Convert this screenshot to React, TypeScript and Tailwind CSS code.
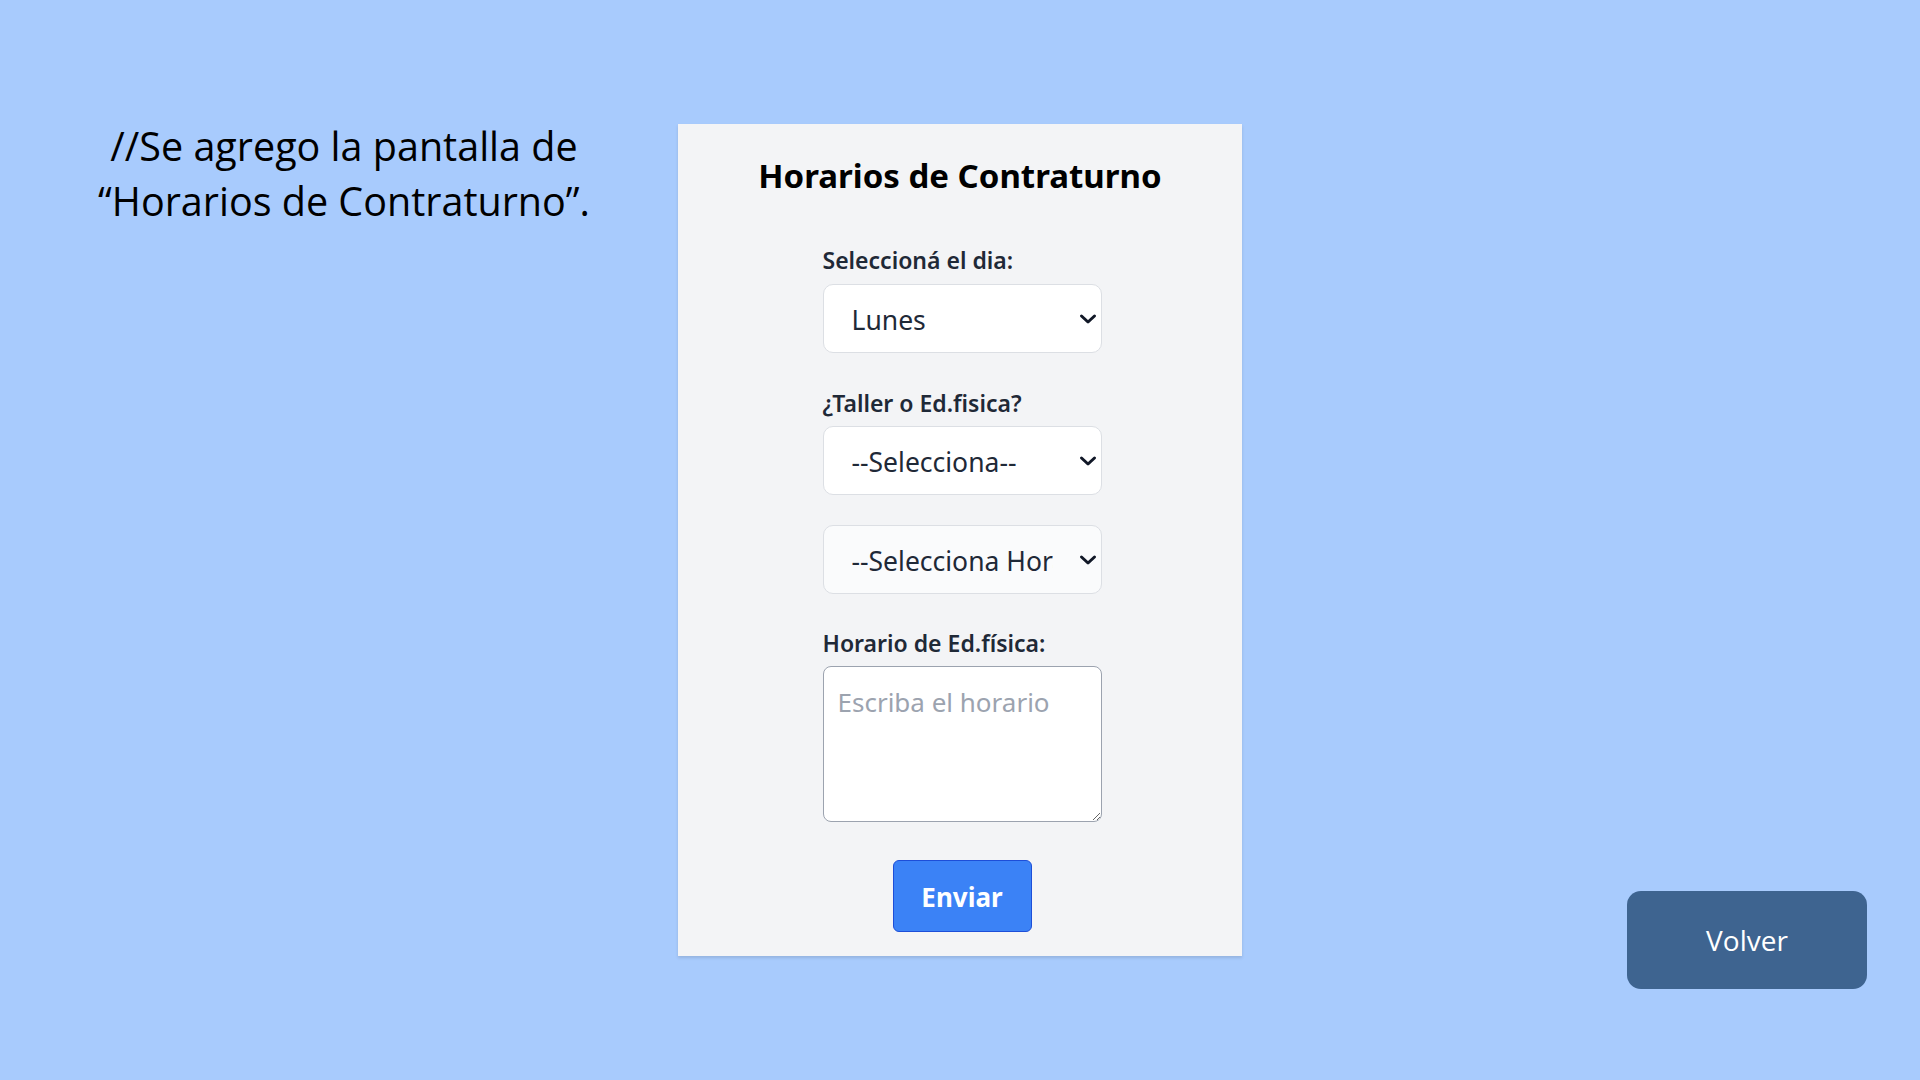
import { useState } from "react";

function Chevron() {
  return (
    <svg
      className="pointer-events-none absolute right-[5px] top-1/2 -translate-y-1/2"
      width="18"
      height="11"
      viewBox="0 0 18 11"
      fill="none"
    >
      <path d="M2.5 2.5 L9 8.5 L15.5 2.5" stroke="#111827" strokeWidth="3" strokeLinecap="round" strokeLinejoin="round" />
    </svg>
  );
}

export default function App() {
  const [dia, setDia] = useState("Lunes");
  const [tipo, setTipo] = useState("");
  const [hora, setHora] = useState("");
  const [texto, setTexto] = useState("");

  const selectCls =
    "block w-full h-[69px] appearance-none rounded-[10px] border border-[#dcdfe4] pl-[28px] pr-[48px] pt-[4px] text-[26.5px] text-[#1f2937] outline-none";
  const labelCls = "text-[23px] font-semibold leading-[28px] text-[#1f2937]";

  return (
    <div className="flex h-[1080px] w-[1920px] bg-[#a8cbfd] font-['Noto_Sans',sans-serif]">
      {/* texto izquierdo */}
      <div className="w-[678px] pl-[10px] pt-[119px] text-center">
        <p className="font-['Open_Sans',sans-serif] text-[39.5px] leading-[55px] text-black">
          //Se agrego la pantalla de
          <br />
          “Horarios de Contraturno”.
        </p>
      </div>

      {/* tarjeta */}
      <div className="mt-[124px] flex h-[832px] w-[564px] flex-col items-center bg-[#f3f4f6] shadow-[0_2px_3px_rgba(0,0,0,0.12)]">
        <h1 className="mt-[32px] text-[33px] font-bold leading-[40px] text-black">
          Horarios de Contraturno
        </h1>

        <form className="mt-[50px] ml-[4px] flex w-[279px] flex-col" onSubmit={(e) => e.preventDefault()}>
          <label className={labelCls}>Seleccioná el dia:</label>
          <div className="relative mt-[10px]">
            <select value={dia} onChange={(e) => setDia(e.target.value)} className={`${selectCls} bg-white`}>
              <option>Lunes</option>
              <option>Martes</option>
              <option>Miércoles</option>
              <option>Jueves</option>
              <option>Viernes</option>
            </select>
            <Chevron />
          </div>

          <label className={`mt-[36px] ${labelCls}`}>¿Taller o Ed.fisica?</label>
          <div className="relative mt-[9px]">
            <select value={tipo} onChange={(e) => setTipo(e.target.value)} className={`${selectCls} bg-white`}>
              <option value="">--Selecciona--</option>
              <option value="taller">Taller</option>
              <option value="edfisica">Ed.fisica</option>
            </select>
            <Chevron />
          </div>

          <div className="relative mt-[30px]">
            <select value={hora} onChange={(e) => setHora(e.target.value)} className={`${selectCls} bg-[#fafbfc]`}>
              <option value="">--Selecciona Horario--</option>
            </select>
            <Chevron />
          </div>

          <label className={`mt-[35px] ${labelCls}`}>Horario de Ed.física:</label>
          <textarea
            value={texto}
            onChange={(e) => setTexto(e.target.value)}
            placeholder="Escriba el horario"
            className="mt-[9px] h-[156px] w-full rounded-[8px] border border-[#9ca3af] bg-white px-[14px] pt-[18px] text-[26px] leading-[34px] text-[#1f2937] outline-none placeholder:text-[#9ca3af]"
          />

          <button
            type="submit"
            className="mt-[38px] h-[72px] w-[139px] self-center rounded-[6px] border border-[#1d4ed8] bg-[#3b82f6] pt-[2px] text-[26px] font-bold text-white"
          >
            Enviar
          </button>
        </form>
      </div>

      <div className="flex flex-1 items-end justify-end pb-[91px] pr-[53px]">
        <button className="h-[98px] w-[240px] rounded-[14px] bg-[#3e6490] font-['Open_Sans',sans-serif] text-[28px] text-white">
          Volver
        </button>
      </div>
    </div>
  );
}
